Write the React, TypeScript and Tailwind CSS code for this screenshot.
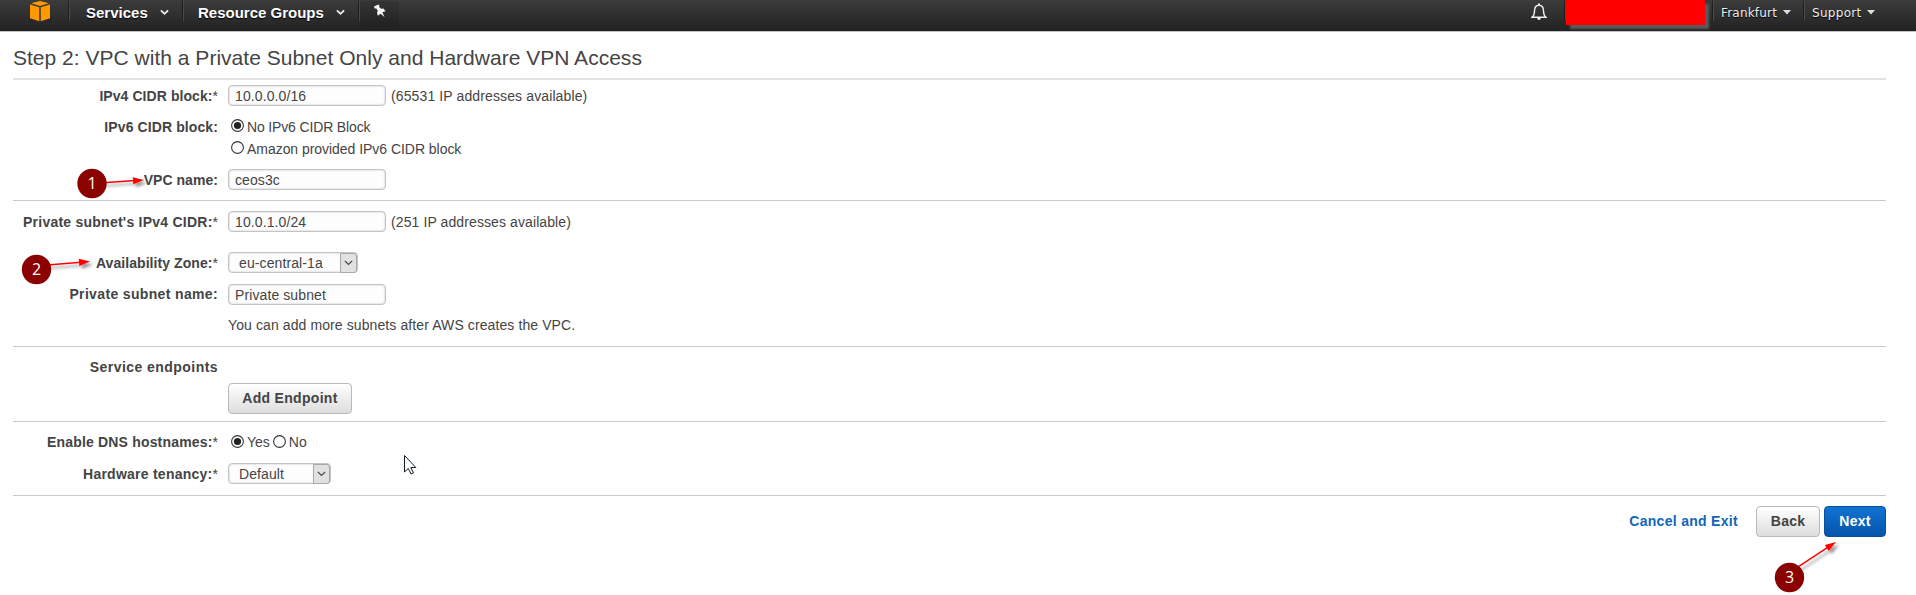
import React from 'react';

function NavDivider() {
  return <div className="h-5 w-[2px] shrink-0 border-l border-[#1c1c1c] bg-[#4c4c4c]" />;
}

function Chevron() {
  return (
    <svg className="mt-px" width="9" height="7" viewBox="0 0 10 7" fill="none" stroke="#eee" strokeWidth="2">
      <path d="M1 1.2 5 5l4-3.8" />
    </svg>
  );
}

function Caret() {
  return (
    <svg className="-mt-px" width="8" height="5" viewBox="0 0 8 5" fill="#ddd">
      <path d="M0 0h8L4 4.6z" />
    </svg>
  );
}

function Navbar() {
  return (
    <header className="flex h-8 items-start border-b border-[#c4c4c4] bg-linear-to-b from-[#3c3c3c] to-[#222] pt-px text-[15px] font-bold text-white [text-shadow:0_1px_1px_#000]">
      <svg className="ml-[30px] shrink-0" width="20" height="21" viewBox="0 0 20 21" fill="#f90">
        <path d="M10 0 19 2.3 10 5 1 2.3z" />
        <path d="M0 3.6 9.3 6.3v14L0 17.2z" />
        <path d="M20 3.6 10.7 6.3v14L20 17.2z" />
      </svg>
      <div className="ml-[18px]"><NavDivider /></div>
      <div className="ml-4 flex h-[22px] w-[96px] items-center">
        <span className="w-[74px]">Services</span>
        <Chevron />
      </div>
      <NavDivider />
      <div className="ml-[14px] flex h-[22px] w-[160px] items-center">
        <span className="w-[138px] whitespace-nowrap">Resource Groups</span>
        <Chevron />
      </div>
      <NavDivider />
      <div className="flex h-[26px] w-[39px] rounded-b bg-black/10 pt-[3px] pl-[13px]">
        <svg width="13" height="15" viewBox="0 0 14 15" fill="#f4f4f4">
          <path d="M1 2.2 6 0l1 1.400-.4 1.200 2.200 2 2.400-.200 2.300 2.800-3.400 1.200 2.400 5.200-4.300-3.800-3 2.400-.9-3.500.9-1.700-1.600-2.800-1.800.200z" />
        </svg>
      </div>
      <div className="ml-auto flex">
        <svg className="mt-[2px] mr-[17px]" width="16" height="18" viewBox="0 0 16 18" fill="none" stroke="#eee" strokeWidth="1.4">
          <path d="M1 14.2c2-1.4 2.4-2.6 2.5-6.2.1-3.6 1.4-5.7 4.5-5.7s4.400 2.100 4.500 5.700c.1 3.600.5 4.800 2.500 6.200z" />
          <path d="M8 .4v1.800" strokeWidth="2" />
          <path d="M6.200 15h3.600c0 1.300-.8 2-1.800 2s-1.800-.7-1.800-2z" fill="#eee" stroke="none" />
        </svg>
        <NavDivider />
        <div className="-mt-px h-[25px] w-[139px] bg-[#f00] shadow-[4px_4px_2px_#5a5a5a]" />
        <div className="ml-[7px]"><NavDivider /></div>
        <div className="ml-[7px] flex h-6 w-[82px] items-center font-['DejaVu_Sans'] text-[12px] font-normal tracking-[0.2px] text-[#eee]">
          <span className="w-[62px]">Frankfurt</span>
          <Caret />
        </div>
        <NavDivider />
        <div className="ml-[7px] mr-[41px] flex h-6 w-[63px] items-center font-['DejaVu_Sans'] text-[12px] font-normal tracking-[0.3px] text-[#eee]">
          <span className="w-[55px]">Support</span>
          <Caret />
        </div>
      </div>
    </header>
  );
}

type RowProps = {
  label?: string;
  labelClass?: string;
  required?: boolean;
  className?: string;
  children?: React.ReactNode;
};

function Row({ label, labelClass = '', required, className = '', children }: RowProps) {
  return (
    <div className={`flex min-h-[21px] items-center gap-[10px] ${className}`}>
      <div className={`h-[21px] w-[205px] shrink-0 text-right font-bold whitespace-nowrap ${labelClass}`}>
        {label}
        {required && <span className="font-normal tracking-normal">*</span>}
      </div>
      <div className="flex items-center">{children}</div>
    </div>
  );
}

function TextInput({ value }: { value: string }) {
  return (
    <input
      readOnly
      value={value}
      className="h-[21px] w-[158px] rounded-[4px] border border-[#c4c4c4] bg-[#fdfdfd] px-[6px] pt-px tracking-[0.1px] shadow-[inset_0_0_2px_#bbb] outline-none"
    />
  );
}

function SelectBox({ value, className }: { value: string; className: string }) {
  return (
    <div className={`flex h-[21px] items-center justify-between rounded-[4px] border border-[#c4c4c4] bg-[#fdfdfd] pl-[10px] shadow-[inset_0_0_2px_#bbb] ${className}`}>
      <span className="pt-px tracking-[0.1px]">{value}</span>
      <span className="flex h-5 w-[17px] items-center justify-center rounded-r-[3px] border border-[#a8a8a8] bg-[#e1e1e1]">
        <svg width="9" height="6" viewBox="0 0 9 6" fill="none" stroke="#444" strokeWidth="1.2">
          <path d="m.8.800 3.700 3.700L8.200.800" />
        </svg>
      </span>
    </div>
  );
}

function Radio({ label, checked, className = '' }: { label: string; checked?: boolean; className?: string }) {
  return (
    <label className="mr-[4px] ml-[3px] flex items-center gap-[3px] first:mr-0">
      <svg className="-mt-[2px]" width="13" height="13" viewBox="0 0 13 13">
        <circle cx="6.500" cy="6.500" r="5.900" fill="#fff" stroke="#333" strokeWidth="1.100" />
        {checked && <circle cx="6.500" cy="6.500" r="3.600" fill="#222" />}
      </svg>
      <span className={`h-[21px] ${className}`}>{label}</span>
    </label>
  );
}

type MarkerProps = {
  number: number;
  x: number;
  y: number;
  tailY: number;
  tipX: number;
  tipY: number;
};

// Numbered badge with an arrow, placed over the form
function Marker({ number, x, y, tailY, tipX, tipY }: MarkerProps) {
  const angle = Math.atan2(tipY - tailY, tipX - x) * (180 / Math.PI);
  const length = Math.hypot(tipX - x, tipY - tailY);

  return (
    <g>
      <g filter="url(#marker-shadow)">
        <g transform={`translate(${x} ${tailY}) rotate(${angle})`}>
          <path d={`M8 0H${length - 9}`} stroke="#f00" strokeWidth="1.500" />
          <path d={`M${length} 0l-11-3.600v7.200z`} fill="#f00" />
        </g>
      </g>
      <circle cx={x} cy={y} r="14.700" fill="#8b0000" />
      <text x={x} y={y + 5.5} textAnchor="middle" fill="#fff" className="font-['Open_Sans'] text-[16px]">
        {number}
      </text>
    </g>
  );
}

export default function App() {
  return (
    <div className="relative h-[595px] overflow-hidden bg-white font-['Liberation_Sans',Arial,sans-serif] text-[14px] leading-[21px] text-[#444]">
      <Navbar />

      <main className="mr-[30px] ml-[13px]">
        <h1 className="flex h-[46px] items-center pt-[5px] text-[21px] tracking-[0.015px] whitespace-nowrap">
          Step 2: VPC with a Private Subnet Only and Hardware VPN Access
        </h1>

        <section className="border-t-2 border-b border-t-[#e3e3e3] border-b-[#c9c9c9] pt-[5px] pb-[10px]">
          <Row label="IPv4 CIDR block:" labelClass="pt-px tracking-[0.07px]" required>
            <TextInput value="10.0.0.0/16" />
            <span className="ml-[5px] h-[21px] pt-px tracking-[0.12px]">(65531 IP addresses available)</span>
          </Row>
          <Row label="IPv6 CIDR block:" labelClass="pt-px tracking-[0.1px]" className="mt-[10px]">
            <Radio label="No IPv6 CIDR Block" checked className="pt-px tracking-[-0.15px]" />
          </Row>
          <Row className="mt-px">
            <Radio label="Amazon provided IPv6 CIDR block" className="pt-px tracking-[-0.04px]" />
          </Row>
          <Row label="VPC name:" labelClass="pt-px tracking-[0.05px]" className="mt-[10px]">
            <TextInput value="ceos3c" />
          </Row>
        </section>

        <section className="border-b border-[#c9c9c9] py-[10px]">
          <Row label="Private subnet's IPv4 CIDR:" labelClass="pt-px tracking-[0.24px]" required>
            <TextInput value="10.0.1.0/24" />
            <span className="ml-[5px] h-[21px] pt-px tracking-[0.1px]">(251 IP addresses available)</span>
          </Row>
          <Row label="Availability Zone:" labelClass="pt-px tracking-[0.07px]" required className="mt-5">
            <SelectBox value="eu-central-1a" className="w-[130px]" />
          </Row>
          <Row label="Private subnet name:" labelClass="tracking-[0.35px]" className="mt-[11px]">
            <TextInput value="Private subnet" />
          </Row>
          <Row className="mt-[10px]">
            <span className="tracking-[0.1px]">You can add more subnets after AWS creates the VPC.</span>
          </Row>
        </section>

        <section className="border-b border-[#c9c9c9] pt-[10px] pb-[7px]">
          <Row label="Service endpoints" labelClass="tracking-[0.45px]" />
          <Row className="mt-[5px]">
            <button className="h-[31px] w-[124px] rounded-[4px] border border-[#b9b9b9] bg-linear-to-b from-white to-[#ddd] font-bold tracking-[0.3px]">
              Add Endpoint
            </button>
          </Row>
        </section>

        <section className="border-b border-[#c9c9c9] pt-[10px] pb-[11px]">
          <Row label="Enable DNS hostnames:" labelClass="tracking-[0.18px]" required>
            <Radio label="Yes" checked />
            <Radio label="No" />
          </Row>
          <Row label="Hardware tenancy:" required labelClass="pt-px tracking-[0.25px]" className="mt-[10px]">
            <SelectBox value="Default" className="w-[103px]" />
          </Row>
        </section>

        <div className="mt-[10px] flex items-center justify-end font-bold">
          <a href="#" className="mr-[18px] tracking-[0.3px] text-[#1166bb]">Cancel and Exit</a>
          <button className="mr-1 h-[31px] w-16 rounded-[4px] border border-[#b9b9b9] bg-linear-to-b from-white to-[#ddd] tracking-[0.2px]">
            Back
          </button>
          <button className="h-[31px] w-[62px] rounded-[4px] border border-[#0a4f9c] bg-linear-to-b from-[#1173d4] to-[#0654ab] tracking-[0.3px] text-white">
            Next
          </button>
        </div>
      </main>

      <svg className="pointer-events-none absolute top-0 left-0" width="1916" height="595">
        <defs>
          <filter id="marker-shadow" filterUnits="userSpaceOnUse" x="0" y="0" width="1916" height="595">
            <feDropShadow dx="3" dy="3" stdDeviation="1.5" floodOpacity="0.4" />
          </filter>
        </defs>
        <Marker number={1} x={92} y={183.5} tailY={183.5} tipX={144} tipY={180} />
        <Marker number={2} x={36.5} y={269.5} tailY={265.8} tipX={90} tipY={261.6} />
        <Marker number={3} x={1789.5} y={577.5} tailY={572.5} tipX={1836} tipY={542} />
        {/* Mouse pointer */}
        <path d="M404.500 455.500v16.500l3.800-3.500 2.700 5.500 2.400-1.100-2.600-5.400h5z" fill="#fff" stroke="#111827" />
      </svg>
    </div>
  );
}
